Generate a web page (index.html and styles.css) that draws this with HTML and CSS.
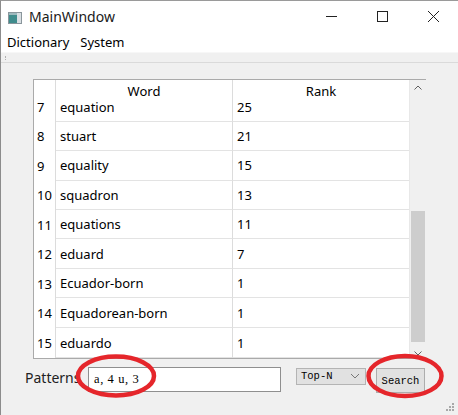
FILE: index.html
```html
<!DOCTYPE html>
<html>
<head>
<meta charset="utf-8">
<link rel="stylesheet" href="styles.css">
</head>
<body>
<div class="window">
  <div class="titlebar">
    <svg class="app-icon" width="14" height="12" viewBox="0 0 14 12">
      <rect x="0.5" y="0.5" width="13" height="11" fill="#d9dfe3" stroke="#8a969c"/>
      <rect x="1" y="1" width="8" height="10" fill="#3f8c8c"/>
      <rect x="1" y="1" width="8" height="2" fill="#9cb9bd"/>
    </svg>
    <span class="title">MainWindow</span>
    <div class="controls">
      <svg width="46" height="33" viewBox="0 0 46 33"><line x1="18" y1="15.5" x2="29" y2="15.5" stroke="#222" stroke-width="1"/></svg>
      <svg width="46" height="33" viewBox="0 0 46 33"><rect x="18.5" y="10.5" width="10" height="10" fill="none" stroke="#222" stroke-width="1"/></svg>
      <svg width="46" height="33" viewBox="0 0 46 33"><path d="M18 10 L29 21 M29 10 L18 21" stroke="#222" stroke-width="1"/></svg>
    </div>
  </div>
  <div class="menubar">
    <span class="menu">Dictionary</span>
    <span class="menu">System</span>
  </div>
  <div class="toolbar"><span class="grip"></span></div>
  <div class="central">
    <div class="tableview">
      <div class="grid">
        <div class="hrow header">
          <div class="vh"></div>
          <div class="c word">Word</div>
          <div class="c rank">Rank</div>
        </div>
        <div class="hrow r first"><div class="vh">7</div><div class="c word">equation</div><div class="c rank">25</div></div>
        <div class="hrow r h29"><div class="vh">8</div><div class="c word">stuart</div><div class="c rank">21</div></div>
        <div class="hrow r h30"><div class="vh">9</div><div class="c word">equality</div><div class="c rank">15</div></div>
        <div class="hrow r h29"><div class="vh">10</div><div class="c word">squadron</div><div class="c rank">13</div></div>
        <div class="hrow r h30"><div class="vh">11</div><div class="c word">equations</div><div class="c rank">11</div></div>
        <div class="hrow r h30"><div class="vh">12</div><div class="c word">eduard</div><div class="c rank">7</div></div>
        <div class="hrow r h29"><div class="vh">13</div><div class="c word">Ecuador-born</div><div class="c rank">1</div></div>
        <div class="hrow r h30"><div class="vh">14</div><div class="c word">Equadorean-born</div><div class="c rank">1</div></div>
        <div class="hrow r h30 last"><div class="vh">15</div><div class="c word">eduardo</div><div class="c rank">1</div></div>
      </div>
      <div class="scrollbar">
        <svg class="arrow" width="16" height="16" viewBox="0 0 16 16"><path d="M4.5 9.5 L8 6 L11.5 9.5" fill="none" stroke="#606060" stroke-width="1"/></svg>
        <div class="track"><div class="thumb"></div></div>
        <svg class="arrow" width="16" height="16" viewBox="0 0 16 16"><path d="M4.5 6.5 L8 10 L11.5 6.5" fill="none" stroke="#606060" stroke-width="1"/></svg>
      </div>
    </div>
    <div class="controls-row">
      <span class="label">Patterns</span>
      <div class="input">a, 4 u, 3</div>
      <div class="combo"><span>Top-N</span><svg width="10" height="6" viewBox="0 0 10 6"><path d="M1 1 L5 5 L9 1" fill="none" stroke="#777" stroke-width="1"/></svg></div>
      <div class="button">Search</div>
    </div>
  </div>
  <svg class="mark mark-left" width="84" height="46" viewBox="0 0 84 46"><ellipse cx="42" cy="23" rx="38" ry="19.5" fill="none" stroke="#e5262b" stroke-width="4.5"/></svg>
  <svg class="mark mark-right" width="82" height="48" viewBox="0 0 82 48"><ellipse cx="41" cy="24" rx="36.5" ry="20" fill="none" stroke="#e5262b" stroke-width="4.5"/></svg>
  <svg class="sizegrip" width="10" height="10" viewBox="0 0 10 10">
    <rect x="7" y="1" width="2" height="2" fill="#a8a8a8"/>
    <rect x="4" y="4" width="2" height="2" fill="#a8a8a8"/>
    <rect x="7" y="4" width="2" height="2" fill="#a8a8a8"/>
    <rect x="1" y="7" width="2" height="2" fill="#a8a8a8"/>
    <rect x="4" y="7" width="2" height="2" fill="#a8a8a8"/>
    <rect x="7" y="7" width="2" height="2" fill="#a8a8a8"/>
  </svg>
</div>
</body>
</html>
```

FILE: styles.css
```css
* { box-sizing: border-box; }
html, body { margin: 0; padding: 0; }
body {
  width: 458px;
  height: 415px;
  overflow: hidden;
  font-family: "Noto Sans", "Open Sans", sans-serif;
  font-size: 13px;
  color: #000;
  background: #f0f0f0;
}
.window {
  position: relative;
  width: 458px;
  height: 415px;
  border-left: 1px solid #8c8c8c;
  border-top: 1px solid #9a9a9a;
  display: flex;
  flex-direction: column;
}
.titlebar {
  height: 32px;
  background: #fff;
  display: flex;
  align-items: center;
  padding-left: 7px;
}
.app-icon { margin-top: 1px; }
.title {
  margin-left: 7px;
  font-size: 14px;
  color: #1a1a1a;
  margin-top: -2px;
}
.controls {
  margin-left: auto;
  display: flex;
  margin-right: 2px;
}
.controls svg { display: block; margin-left: 5px; }
.menubar {
  height: 19px;
  background: #fff;
  display: flex;
  align-items: center;
  padding-left: 6px;
}
.menu { margin-right: 11px; line-height: 19px; }
.toolbar {
  height: 11px;
  background: #f0f0f0;
  border-top: 1px solid #f7f7f7;
  border-bottom: 1px solid #dadada;
  position: relative;
}
.grip {
  display: block;
  width: 1px;
  height: 4px;
  margin: 3px 0 0 4px;
  border-left: 1px dotted #b0b0b0;
}
.central {
  flex: 1;
  display: flex;
  flex-direction: column;
  padding: 16px 0 0 24px;
}
.tableview {
  margin-left: 8px;
  width: 393px;
  height: 280px;
  border: 1px solid #aaa;
  background: #fff;
  display: flex;
}
.grid {
  width: 375px;
  display: flex;
  flex-direction: column;
}
.hrow {
  display: flex;
}
.vh {
  width: 22px;
  flex: none;
  border-right: 1px solid #dcdcdc;
  padding-left: 3px;
  white-space: nowrap;
}
.c { white-space: nowrap; }
.word {
  width: 177px;
  border-right: 1px solid #dcdcdc;
  padding-left: 4px;
}
.rank {
  width: 176px;
  padding-left: 4px;
}
.header {
  height: 19px;
  padding-top: 3px;
  line-height: 16px;
}
.header .vh, .header .c { height: 16px; }
.header .word, .header .rank { text-align: center; padding-left: 0; }
.header .vh { height: 19px; margin-top: -3px; }
.header .word { height: 19px; margin-top: -3px; padding-top: 3px; }
.r { align-items: stretch; }
.r .word, .r .rank { border-bottom: 1px solid #e3e3e3; display: flex; align-items: center; }
.r .vh { display: flex; align-items: center; }
.first { height: 23px; }
.first .vh, .first .c { align-items: flex-start; line-height: 16px; }
.h29 { height: 29px; }
.h30 { height: 30px; }
.last { height: 30px; }
.scrollbar {
  width: 17px;
  border-left: 1px solid #e8e8e8;
  background: #f0f0f0;
  display: flex;
  flex-direction: column;
  align-items: center;
}
.arrow { display: block; flex: none; }
.track { flex: 1; width: 100%; padding-top: 115px; padding-bottom: 3px; display: flex; flex-direction: column; }
.thumb { margin: 0 1px; height: 131px; background: #cdcdcd; }
.controls-row {
  display: flex;
  align-items: center;
  margin-top: 7px;
  height: 26px;
}
.label {
  width: 63px;
  flex: none;
  color: #222;
  font-size: 14px;
  margin-top: -3px;
  white-space: nowrap;
}
.input {
  width: 193px;
  height: 25px;
  border: 1px solid #8f8f8f;
  background: #fff;
  font-family: "Liberation Serif", serif;
  font-size: 12.5px;
  letter-spacing: 0.6px;
  line-height: 23px;
  padding-left: 5px;
}
.combo {
  margin-left: 15px;
  width: 70px;
  height: 17px;
  margin-top: -6px;
  background: #e1e1e1;
  border: 1px solid #b4b4b4;
  font-family: "Liberation Mono", monospace;
  font-size: 10.5px;
  line-height: 15px;
  padding-left: 4px;
  display: flex;
  align-items: center;
}
.combo svg { margin-left: auto; margin-right: 5px; }
.button {
  margin-left: 10px;
  width: 49px;
  height: 25px;
  margin-top: 3px;
  background: #e1e1e1;
  border: 1px solid #adadad;
  font-family: "Liberation Mono", monospace;
  font-size: 10.5px;
  display: flex;
  align-items: center;
  justify-content: center;
}
.mark { position: absolute; }
.mark-left { left: 73px; top: 352px; }
.mark-right { left: 363px; top: 351px; }
.sizegrip { position: absolute; right: 3px; bottom: 3px; }
```
